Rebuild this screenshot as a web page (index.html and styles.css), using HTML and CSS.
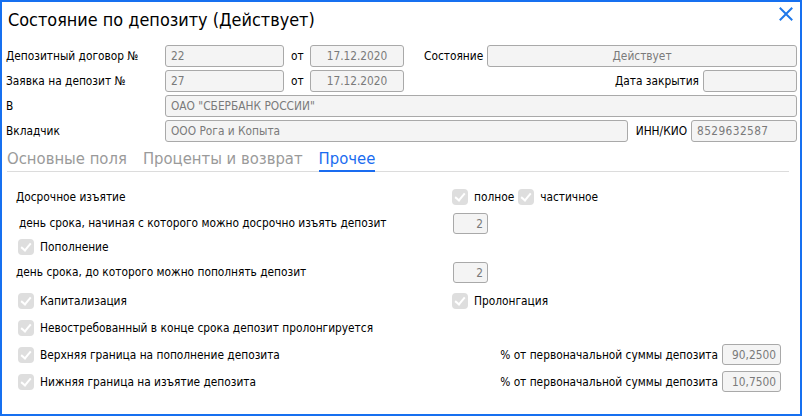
FILE: index.html
```html
<!DOCTYPE html>
<html lang="ru">
<head>
<meta charset="utf-8">
<title>Состояние по депозиту</title>
<link rel="stylesheet" href="styles.css">
</head>
<body>
<div class="dlg">
  <div class="head">
    <div class="title">Состояние по депозиту (Действует)</div>
    <svg class="close" width="14" height="14" viewBox="0 0 14 14"><path d="M1.5 1.5 L12.5 12.5 M12.5 1.5 L1.5 12.5" stroke="#1f78ea" stroke-width="2" fill="none" stroke-linecap="square"/></svg>
  </div>

  <div class="form">
    <div class="frow">
      <div class="lbl">Депозитный договор №</div>
      <div class="inp w-num">22</div>
      <div class="ot">от</div>
      <div class="inp w-date center">17.12.2020</div>
      <div class="lbl2 ml20">Состояние</div>
      <div class="inp grow center">Действует</div>
    </div>
    <div class="frow">
      <div class="lbl">Заявка на депозит №</div>
      <div class="inp w-num">27</div>
      <div class="ot">от</div>
      <div class="inp w-date center">17.12.2020</div>
      <div class="spacer"></div>
      <div class="lbl2">Дата закрытия</div>
      <div class="inp w-date"></div>
    </div>
    <div class="frow">
      <div class="lbl">В</div>
      <div class="inp grow">ОАО "СБЕРБАНК РОССИИ"</div>
    </div>
    <div class="frow">
      <div class="lbl">Вкладчик</div>
      <div class="inp grow">ООО Рога и Копыта</div>
      <div class="lbl2 ml8">ИНН/КИО</div>
      <div class="inp w-inn">8529632587</div>
    </div>
  </div>

  <div class="tabs">
    <div class="tab">Основные поля</div>
    <div class="tab">Проценты и возврат</div>
    <div class="tab active">Прочее</div>
  </div>

  <div class="content">
    <div class="crow h26">
      <div class="left">Досрочное изъятие</div>
      <div class="right">
        <span class="cb"></span><span class="cbt">полное</span>
        <span class="cb"></span><span class="cbt">частичное</span>
      </div>
    </div>
    <div class="crow h26">
      <div class="left indent">день срока, начиная с которого можно досрочно изъять депозит</div>
      <div class="right"><div class="inp w-day">2</div></div>
    </div>
    <div class="crow h21">
      <div class="left chk"><span class="cb"></span><span class="cbt">Пополнение</span></div>
    </div>
    <div class="crow h30">
      <div class="left">день срока, до которого можно пополнять депозит</div>
      <div class="right"><div class="inp w-day">2</div></div>
    </div>
    <div class="crow h27">
      <div class="left chk"><span class="cb"></span><span class="cbt">Капитализация</span></div>
      <div class="right"><span class="cb"></span><span class="cbt">Пролонгация</span></div>
    </div>
    <div class="crow h27">
      <div class="left chk"><span class="cb"></span><span class="cbt">Невостребованный в конце срока депозит пролонгируется</span></div>
    </div>
    <div class="crow h27">
      <div class="left chk"><span class="cb"></span><span class="cbt">Верхняя граница на пополнение депозита</span></div>
      <div class="pct"><span class="lbl2">% от первоначальной суммы депозита</span><div class="inp w-pct">90,2500</div></div>
    </div>
    <div class="crow h27">
      <div class="left chk"><span class="cb"></span><span class="cbt">Нижняя граница на изъятие депозита</span></div>
      <div class="pct"><span class="lbl2">% от первоначальной суммы депозита</span><div class="inp w-pct">10,7500</div></div>
    </div>
  </div>
</div>
</body>
</html>
```
FILE: styles.css
```css
* { box-sizing: border-box; }
html, body { margin: 0; padding: 0; background: #ffffff; }
body {
  font-family: "DejaVu Sans Condensed", "DejaVu Sans", sans-serif;
  font-stretch: condensed;
  font-size: 11.8px;
  color: #111;
}
.dlg {
  width: 802px;
  height: 416px;
  border: 2px solid #1670f0;
  background: #fff;
  display: flex;
  flex-direction: column;
}
.head {
  height: 41px;
  display: flex;
  justify-content: space-between;
  align-items: flex-start;
  padding: 6px 7px 0 6px;
}
.title {
  font-size: 17.9px;
  line-height: 24px;
  color: #000;
}
.close { margin-top: -1px; }

.form {
  margin-top: 2px;
  padding: 0 3px 0 4px;
  display: flex;
  flex-direction: column;
  gap: 3px;
}
.frow {
  display: flex;
  align-items: center;
  height: 22px;
}
.lbl { width: 159px; color: #000; }
.lbl2 { color: #000; white-space: nowrap; margin-right: 4px; }
.ml20 { margin-left: 20px; }
.ml8 { margin-left: 8px; }
.ot { width: 26px; padding-left: 7px; color: #000; }
.spacer { flex: 1; }
.inp {
  height: 22px;
  border: 1px solid #a9a9a9;
  border-radius: 3px;
  background: #f4f4f4;
  color: #7a7a7a;
  padding: 0 5px;
  line-height: 20px;
  white-space: nowrap;
  overflow: hidden;
}
.center { text-align: center; }
.grow { flex: 1; }
.w-num { width: 119px; }
.w-date { width: 94px; }
.w-inn { width: 106px; letter-spacing: 0.4px; }
.w-day { width: 35px; height: 21px; text-align: right; padding-right: 4px; }
.w-pct { width: 59px; height: 21px; text-align: right; padding-right: 4px; }

.tabs {
  margin: 6px 11px 0 5px;
  height: 24px;
  display: flex;
  align-items: flex-end;
  gap: 16px;
  border-bottom: 1px solid #dcdcdc;
}
.tab {
  font-size: 16.5px;
  line-height: 20px;
  color: #9a9a9a;
  border-bottom: 2px solid transparent;
  margin-bottom: -1px;
  padding-bottom: 1px;
}
.tab.active {
  color: #1a6cf0;
  border-bottom-color: #1a6cf0;
}

.content {
  margin-top: 12px;
  display: flex;
  flex-direction: column;
}
.crow {
  display: flex;
  align-items: center;
  padding-left: 14px;
  padding-right: 19px;
}
.h21 { height: 21px; }
.h26 { height: 26px; }
.h27 { height: 27px; }
.h30 { height: 30px; }
.left {
  width: 435px;
  display: flex;
  align-items: center;
  white-space: nowrap;
  color: #000;
}
.left.indent { padding-left: 3px; }
.left.chk { padding-left: 2px; }
.right {
  display: flex;
  align-items: center;
  padding-left: 1px;
}
.right .inp { margin-left: 1px; }
.pct {
  flex: 1;
  display: flex;
  align-items: center;
  justify-content: flex-end;
}
.cb {
  width: 16px;
  height: 16px;
  border-radius: 4px;
  background: #dedede;
  position: relative;
  flex: none;
}
.cb::after {
  content: "";
  position: absolute;
  left: 5px;
  top: 2px;
  width: 4px;
  height: 8px;
  border: solid #fff;
  border-width: 0 2px 2px 0;
  transform: rotate(40deg);
}
.cbt { margin: 0 4px 0 6px; color: #000; }
```
